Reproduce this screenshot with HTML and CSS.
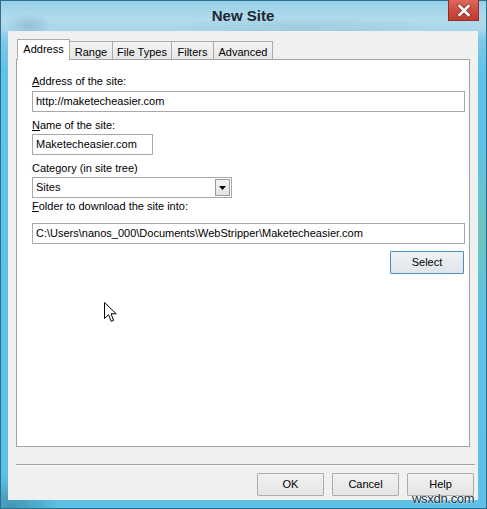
FILE: index.html
```html
<!DOCTYPE html>
<html lang="en">
<head>
<meta charset="utf-8">
<title>New Site</title>
<link rel="stylesheet" href="styles.css">
</head>
<body>
<div class="window">
  <div class="titlebar">
    <h1 class="title">New Site</h1>
    <button class="close" type="button" aria-label="Close">
      <svg width="29" height="19" viewBox="0 0 29 19">
        <path d="M10.5 5 L19.5 14 M19.5 5 L10.5 14" stroke="#5b2a26" stroke-width="4.4" stroke-linecap="square" opacity="0.55"/>
        <path d="M10.5 5 L19.5 14 M19.5 5 L10.5 14" stroke="#ffffff" stroke-width="2.6" stroke-linecap="square"/>
      </svg>
    </button>
  </div>
  <div class="client">
    <div class="tabs">
      <div class="tab tab-active tab-address">Address</div>
      <div class="tab tab-range">Range</div>
      <div class="tab tab-filetypes">File Types</div>
      <div class="tab tab-filters">Filters</div>
      <div class="tab tab-advanced">Advanced</div>
    </div>
    <div class="panel">
      <div class="label label-address"><u>A</u>ddress of the site:</div>
      <div class="field field-wide">http://maketecheasier.com</div>
      <div class="label label-name"><u>N</u>ame of the site:</div>
      <div class="field field-name">Maketecheasier.com</div>
      <div class="label label-category">Category (in site tree)</div>
      <div class="field field-select">
        <span>Sites</span>
        <span class="combo-btn">
          <svg width="7" height="4" viewBox="0 0 7 4"><polygon points="0,0 7,0 3.5,4" fill="#000"/></svg>
        </span>
      </div>
      <div class="label label-folder"><u>F</u>older to download the site into:</div>
      <div class="field field-wide">C:\Users\nanos_000\Documents\WebStripper\Maketecheasier.com</div>
      <button class="btn btn-select" type="button">Select</button>
    </div>
    <div class="separator"></div>
    <div class="footer">
      <button class="btn" type="button">OK</button>
      <button class="btn" type="button">Cancel</button>
      <button class="btn" type="button">Help</button>
    </div>
  </div>
  <svg class="cursor" width="13" height="21" viewBox="0 0 13 21">
    <path d="M0.5 0.5 V16.5 L4.5 12.7 L7.2 19.3 L9.6 18.3 L7 11.8 H12.2 Z" fill="#ffffff" stroke="#000000" stroke-width="1" stroke-linejoin="miter"/>
  </svg>
  <div class="watermark">wsxdn.com</div>
</div>
</body>
</html>
```

FILE: styles.css
```css
* {
  box-sizing: border-box;
}

html,
body {
  margin: 0;
  padding: 0;
}

body {
  width: 487px;
  height: 509px;
  overflow: hidden;
  font-family: "Liberation Sans", Arial, sans-serif;
  font-size: 11px;
  color: #000;
}

.window {
  position: relative;
  width: 487px;
  height: 509px;
  border: 1px solid #2c6f8d;
  padding: 0 8px 8px 7px;
  display: flex;
  flex-direction: column;
  background:
    radial-gradient(ellipse 22px 12px at 28px 24px, rgba(70, 120, 150, 0.25), transparent),
    radial-gradient(ellipse 130px 10px at 300px 26px, rgba(80, 120, 140, 0.12), transparent),
    radial-gradient(ellipse 40px 90px at 486px 230px, rgba(120, 200, 160, 0.6), transparent),
    radial-gradient(ellipse 50px 30px at 10px 505px, rgba(40, 110, 130, 0.5), transparent),
    linear-gradient(180deg, #96d0e8 0px, #b2dbec 18px, #a9d7eb 28px, #7cc8ea 40px, #5fc2e9 70px, #5dc0e7 100%);
}

.titlebar {
  height: 30px;
  display: grid;
  grid-template-columns: 1fr auto 1fr;
}

.title {
  grid-column: 2;
  margin: 0;
  font-size: 15px;
  font-weight: bold;
  line-height: 30px;
  color: #1b2733;
}

.close {
  grid-column: 3;
  justify-self: end;
  align-self: start;
  width: 31px;
  height: 21px;
  margin: -1px -1px 0 0;
  padding: 0;
  border: 1px solid #8e2f27;
  border-top: none;
  background: linear-gradient(180deg, #e0675c 0%, #cf4a3f 50%, #c23a30 100%);
  display: flex;
  align-items: center;
  justify-content: center;
}

.client {
  flex: 1;
  background: #f0f0f0;
  padding: 8px 0 4px 0;
  display: flex;
  flex-direction: column;
}

.tabs {
  display: flex;
  align-items: flex-end;
  height: 20px;
  margin-left: 9px;
}

.tab {
  height: 18px;
  padding-top: 4px;
  line-height: 13px;
  text-align: center;
  white-space: nowrap;
  border: 1px solid #acacac;
  border-bottom: none;
  background: linear-gradient(180deg, #f3f3f3, #e6e6e6);
  margin-left: -1px;
}

.tab-active {
  position: relative;
  z-index: 1;
  height: 21px;
  padding-top: 3px;
  margin-left: 0;
  margin-bottom: -1px;
  background: #fff;
}

.tab-address {
  width: 53px;
}

.tab-range {
  width: 44px;
}

.tab-filetypes {
  width: 60px;
}

.tab-filters {
  width: 43px;
}

.tab-advanced {
  width: 60px;
}

.panel {
  margin-left: 8px;
  width: 454px;
  height: 388px;
  border: 1px solid #a3a3a3;
  background: #fff;
  padding: 15px 5px 0 15px;
  display: flex;
  flex-direction: column;
  align-items: flex-start;
}

.label {
  line-height: 13px;
  white-space: nowrap;
}

.label-address {
  margin-bottom: 3px;
}

.label-name {
  margin: 7px 0 2px;
}

.label-category {
  margin: 7px 0 2px;
}

.label-folder {
  margin: 2px 0 10px;
}

.field {
  height: 21px;
  border: 1px solid #a8a8a8;
  background: #fff;
  padding: 0 3px;
  line-height: 19px;
  white-space: nowrap;
  overflow: hidden;
}

.field-wide {
  width: 433px;
}

.field-name {
  width: 121px;
}

.field-select {
  width: 200px;
  padding-right: 1px;
  display: flex;
  align-items: center;
  justify-content: space-between;
}

.combo-btn {
  width: 15px;
  height: 17px;
  border: 1px solid #9a9a9a;
  background: linear-gradient(180deg, #f4f4f4, #e2e2e2);
  display: flex;
  align-items: center;
  justify-content: center;
}

.btn {
  width: 67px;
  height: 23px;
  padding: 0;
  border: 1px solid #acacac;
  border-radius: 1px;
  background: linear-gradient(180deg, #f2f2f2, #e4e4e4);
  font-family: "Liberation Sans", Arial, sans-serif;
  font-size: 11px;
  line-height: 21px;
  color: #000;
}

.btn-select {
  width: 74px;
  margin-top: 7px;
  align-self: flex-end;
  border-color: #4a8ec2;
  background: linear-gradient(180deg, #eef2f5, #dfe5ea);
}

.separator {
  margin: 17px 3px 0 8px;
  height: 2px;
  border-top: 1px solid #a0a0a0;
  border-bottom: 1px solid #ffffff;
}

.footer {
  display: flex;
  justify-content: flex-end;
  gap: 8px;
  margin-top: 7px;
  padding-right: 4px;
}

.cursor {
  position: absolute;
  left: 103px;
  top: 301px;
}

.watermark {
  position: absolute;
  left: 411px;
  top: 490px;
  font-family: "Liberation Sans", Arial, sans-serif;
  font-size: 13px;
  line-height: 15px;
  letter-spacing: -0.3px;
  color: #10303f;
  text-shadow: 0 0 2px #ffffff, 0 0 1px #ffffff;
}
```
